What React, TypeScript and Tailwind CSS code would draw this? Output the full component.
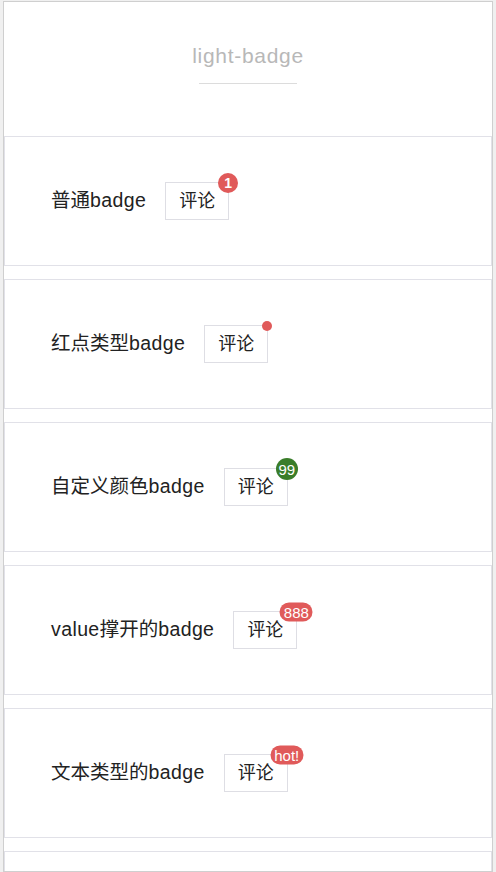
import React from "react";

interface Demo {
  label: string;
  badge: React.ReactNode;
}

// latin runs in the labels get a touch of tracking to match the reference
function Label({ text }: { text: string }) {
  const parts = text.split(/([A-Za-z]+)/).filter(Boolean);
  return (
    <span className="text-[19.5px] text-[#222]">
      {parts.map((p, i) =>
        /[A-Za-z]/.test(p) ? (
          <span key={i} className="tracking-[0.4px]">
            {p}
          </span>
        ) : (
          <span key={i}>{p}</span>
        )
      )}
    </span>
  );
}

function Pill({ text, color }: { text: string; color: string }) {
  return (
    <span
      className={`absolute right-0 top-0 translate-x-1/2 -translate-y-1/2 flex items-center justify-center h-[19px] min-w-[19px] px-[4px] rounded-full text-[15px] leading-none text-white ${color}`}
    >
      {text}
    </span>
  );
}

const demos: Demo[] = [
  {
    label: "普通badge",
    badge: (
      <span className="absolute right-0 top-0 translate-x-1/2 -translate-y-1/2 flex items-center justify-center w-[20px] h-[20px] rounded-full bg-[#e05a5a] text-[14px] font-bold leading-none text-white">
        1
      </span>
    ),
  },
  {
    label: "红点类型badge",
    badge: (
      <span className="absolute right-0 top-0 translate-x-1/2 -translate-y-1/2 w-[10px] h-[10px] rounded-full bg-[#e05a5a]" />
    ),
  },
  {
    label: "自定义颜色badge",
    badge: (
      <span className="absolute right-0 top-0 translate-x-1/2 -translate-y-1/2 flex items-center justify-center w-[22px] h-[22px] rounded-full bg-[#3a7d2a] text-[15px] leading-none text-white">
        99
      </span>
    ),
  },
  { label: "value撑开的badge", badge: <Pill text="888" color="bg-[#e05a5a]" /> },
  { label: "文本类型的badge", badge: <Pill text="hot!" color="bg-[#e05a5a]" /> },
];

export default function App() {
  return (
    <div
      className="min-h-screen bg-[#f0f0f0] px-[3px] pt-[1px]"
      style={{ fontFamily: '"Liberation Sans", "Noto Sans CJK SC", sans-serif' }}
    >
      <div className="bg-white border border-[#cfcfcf] h-[871px] overflow-hidden">
        {/* Header */}
        <div className="h-[134px] flex flex-col items-center pt-[41px]">
          <h1 className="text-[21px] leading-[26px] tracking-[0.7px] text-[#b8b8b8]">light-badge</h1>
          <div className="mt-[14px] w-[98px] h-px bg-[#dcdcdc]" />
        </div>

        {/* Cards */}
        <div className="flex flex-col gap-[13px]">
          {demos.map((d) => (
            <div
              key={d.label}
              className="h-[130px] border border-[#e1e1e8] flex items-center pl-[46px]"
            >
              <Label text={d.label} />
              <span className="relative ml-[19px] h-[38px] px-[13px] flex items-center border border-[#dedee4] text-[18px] text-[#222]">
                评论
                {d.badge}
              </span>
            </div>
          ))}
          <div className="h-[40px] border border-[#e1e1e8]" />
        </div>
      </div>
    </div>
  );
}
